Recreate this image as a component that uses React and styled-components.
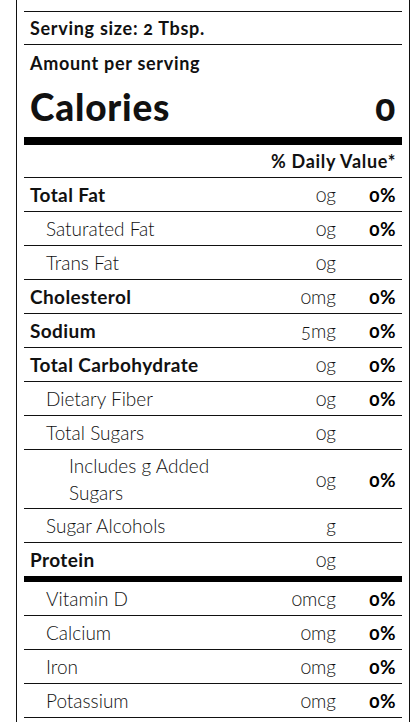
import React from "react";
import styled, { createGlobalStyle } from "styled-components";

const GlobalStyle = createGlobalStyle`
  body {
    margin: 0;
    background: #fff;
    font-family: Lato, "Open Sans", "Liberation Sans", sans-serif;
    color: #111;
    font-variant-numeric: oldstyle-nums;
    font-feature-settings: "onum" 1;
  }
`;

const nutrients = [
  { label: "Total Fat", amount: "0g", dv: "0%", level: 0 },
  { label: "Saturated Fat", amount: "0g", dv: "0%", level: 1 },
  { label: "Trans Fat", amount: "0g", level: 1 },
  { label: "Cholesterol", amount: "0mg", dv: "0%", level: 0 },
  { label: "Sodium", amount: "5mg", dv: "0%", level: 0 },
  { label: "Total Carbohydrate", amount: "0g", dv: "0%", level: 0 },
  { label: "Dietary Fiber", amount: "0g", dv: "0%", level: 1 },
  { label: "Total Sugars", amount: "0g", level: 1 },
  { label: "Includes g Added Sugars", amount: "0g", dv: "0%", level: 2 },
  { label: "Sugar Alcohols", amount: "g", level: 1 },
  { label: "Protein", amount: "0g", level: 0, thick: true },
];

const vitamins = [
  { label: "Vitamin D", amount: "0mcg", dv: "0%" },
  { label: "Calcium", amount: "0mg", dv: "0%" },
  { label: "Iron", amount: "0mg", dv: "0%" },
  { label: "Potassium", amount: "0mg", dv: "0%" },
];

export default function App() {
  return (
    <>
      <GlobalStyle />
      <Label>
        <ServingRow>Serving size: 2 Tbsp.</ServingRow>
        <AmountBlock>
          <AmountText>Amount per serving</AmountText>
          <CaloriesRow>
            <span>Calories</span>
            <span>0</span>
          </CaloriesRow>
        </AmountBlock>
        <DailyHeader>% Daily Value*</DailyHeader>
        {nutrients.map((n) => (
          <Row key={n.label} $thick={n.thick}>
            <Name $level={n.level}>{n.label}</Name>
            <Amount>{n.amount}</Amount>
            <Percent>{n.dv}</Percent>
          </Row>
        ))}
        {vitamins.map((v) => (
          <Row key={v.label}>
            <Name $level={1}>{v.label}</Name>
            <Amount>{v.amount}</Amount>
            <Percent>{v.dv}</Percent>
          </Row>
        ))}
      </Label>
    </>
  );
}

const Label = styled.div`
  width: 378px;
  margin-left: 16px;
  padding: 11px 7px 8px;
  border: 1px solid #111;
  border-top: none;
`;

const ServingRow = styled.div`
  height: 32px;
  padding: 0 6px;
  display: flex;
  align-items: center;
  border-top: 1px solid #111;
  border-bottom: 1px solid #111;
  font-size: 18px;
  font-weight: 700;
  letter-spacing: 0.7px;
`;

const AmountBlock = styled.div`
  padding: 6px 6px 8px;
  border-bottom: 8px solid #000;
`;

const AmountText = styled.div`
  line-height: 24px;
  font-size: 18px;
  font-weight: 700;
  letter-spacing: 0.7px;
`;

const CaloriesRow = styled.div`
  margin-top: 10px;
  display: flex;
  justify-content: space-between;
  line-height: 44px;
  font-size: 37px;
  font-weight: 900;
  letter-spacing: 0.8px;
`;

const DailyHeader = styled.div`
  height: 32px;
  padding: 0 6px;
  display: flex;
  align-items: center;
  justify-content: flex-end;
  border-bottom: 1px solid #111;
  font-size: 18px;
  font-weight: 700;
  letter-spacing: 0.7px;
`;

const Row = styled.div`
  min-height: 29px;
  padding: 2px 6px;
  display: grid;
  grid-template-columns: 1fr auto 60px;
  align-items: center;
  border-bottom: ${(p) => (p.$thick ? "6px solid #000" : "1px solid #111")};
  font-size: 19px;
  line-height: 27px;
`;

const Name = styled.div`
  padding-left: ${(p) => [0, 16, 39][p.$level]}px;
  padding-right: ${(p) => (p.$level === 2 ? "80px" : "0")};
  font-weight: ${(p) => (p.$level === 0 ? 700 : 300)};
  letter-spacing: ${(p) => (p.$level === 0 ? "0.4px" : "0")};
  color: #111;
`;

const Amount = styled.div`
  text-align: right;
  font-weight: 300;
  color: #111;
`;

const Percent = styled.div`
  text-align: right;
  font-weight: 700;
  letter-spacing: 0.4px;
  color: #000;
`;
